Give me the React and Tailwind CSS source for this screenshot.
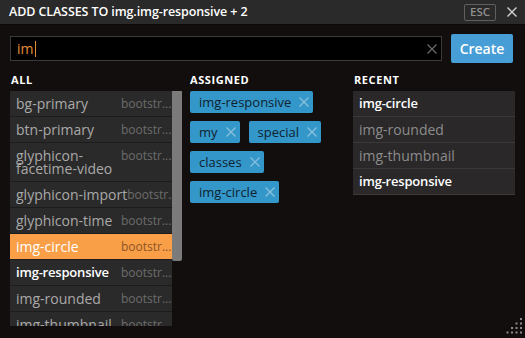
import React from "react";

const F = { fontFamily: '"Open Sans", "Liberation Sans", sans-serif' };

function X({ size = 10, color = "#ccc", w = 1.3 }) {
  return (
    <svg width={size} height={size} viewBox="0 0 10 10" className="shrink-0">
      <path d="M0.5 0.5 L9.5 9.5 M9.5 0.5 L0.5 9.5" stroke={color} strokeWidth={w} fill="none" />
    </svg>
  );
}

const allRows = [
  { name: "bg-primary" },
  { name: "btn-primary" },
  { name: "glyphicon-\nfacetime-video" },
  { name: "glyphicon-import" },
  { name: "glyphicon-time" },
  { name: "img-circle", active: true },
  { name: "img-responsive", bold: true },
  { name: "img-rounded" },
  { name: "img-thumbnail" },
];

const recent = [
  { name: "img-circle", bold: true },
  { name: "img-rounded" },
  { name: "img-thumbnail" },
  { name: "img-responsive", bold: true },
];

function Tag({ children }) {
  return (
    <div className="flex h-[22px] items-center rounded-[2px] bg-[#3497c9] pl-[9px] pr-[4px] text-[13px] text-[#0f2230]">
      <span className="leading-none">{children}</span>
      <span className="ml-[8px]">
        <X size={10} color="#8cc2dd" w={1.2} />
      </span>
    </div>
  );
}

export default function App() {
  return (
    <div style={F} className="relative flex h-[338px] w-[525px] flex-col overflow-hidden bg-[#110e0d]">
      {/* header */}
      <div className="flex h-[25px] shrink-0 items-center border-b border-[#0a0a0a] bg-[#2b2a2a] pl-[9px] pr-[8px]">
        <div className="flex-1 text-[12.5px] font-semibold tracking-[-0.1px] text-white">
          ADD CLASSES TO img.img-responsive + 2
        </div>
        <div className="flex h-[17px] w-[32px] items-center justify-center rounded-[2px] border border-[#5f5f5f] text-[11.5px] font-semibold text-[#8e8e8e]">
          ESC
        </div>
        <div className="ml-[11px]">
          <X size={10} color="#d0d0d0" w={1.4} />
        </div>
      </div>

      {/* input row */}
      <div className="mt-[9px] flex h-[29px] items-center pl-[10px] pr-[12px]">
        <div className="flex h-[25px] w-[432px] items-center border border-[#3d3b3a] bg-black pl-[6px] pr-[4px]">
          <span className="text-[14px] leading-none text-[#e88f3a]">im</span>
          <span className="ml-[1px] h-[16px] w-[1px] bg-[#e88f3a]" />
          <div className="flex-1" />
          <X size={10} color="#6a6a6a" w={1.2} />
        </div>
        <div className="ml-[9px] flex h-[29px] w-[62px] items-center justify-center rounded-[2px] bg-[#479ed6] text-[14px] font-semibold text-white">
          Create
        </div>
      </div>

      {/* columns */}
      <div className="mt-[10px] flex gap-[8px] pl-[10px]">
        {/* ALL */}
        <div className="flex w-[172px] flex-col">
          <div className="h-[18px] pl-[1px] text-[11px] font-bold leading-[14px] tracking-[0.6px] text-white">ALL</div>
          <div className="flex h-[235px] overflow-hidden">
            <div className="w-[162px]">
              {allRows.map((r, i) => (
                <div
                  key={i}
                  className={
                    "flex border-b border-[#1c1c1c] py-[6px] pl-[6px] pr-[5px] " +
                    (r.active ? "bg-[#f89f48]" : "bg-[#2b2a2a]")
                  }
                >
                  <div
                    className={
                      "flex-1 whitespace-pre leading-[13px] " +
                      (r.active
                        ? "text-[14px] text-white"
                        : r.bold
                        ? "text-[13px] font-semibold tracking-[-0.2px] text-white"
                        : "text-[14px] text-[#a9a9a9]")
                    }
                  >
                    {r.name}
                  </div>
                  <div
                    className={
                      "w-[46px] text-[12px] leading-[13px] " + (r.active ? "text-[#8d5526]" : "text-[#6c6c6c]")
                    }
                  >
                    bootstr...
                  </div>
                </div>
              ))}
            </div>
            <div className="h-[170px] w-[10px] rounded-b-[2px] bg-[#7b7b7b]" />
          </div>
        </div>

        {/* ASSIGNED */}
        <div className="flex w-[155px] flex-col">
          <div className="h-[18px] text-[11px] font-bold leading-[14px] tracking-[0.6px] text-white">ASSIGNED</div>
          <div className="flex flex-col gap-[8px]">
            <div className="flex">
              <Tag>img-responsive</Tag>
            </div>
            <div className="flex gap-[9px]">
              <Tag>my</Tag>
              <Tag>special</Tag>
            </div>
            <div className="flex">
              <Tag>classes</Tag>
            </div>
            <div className="flex">
              <Tag>img-circle</Tag>
            </div>
          </div>
        </div>

        {/* RECENT */}
        <div className="flex w-[162px] flex-col">
          <div className="h-[18px] pl-[1px] text-[11px] font-bold leading-[14px] tracking-[0.6px] text-white">RECENT</div>
          <div className="flex flex-col">
            {recent.map((r, i) => (
              <div
                key={i}
                className={
                  "border-b border-[#3a3838] bg-[#2a2828] py-[6px] pl-[6px] leading-[13px] " +
                  (r.bold ? "text-[13px] font-semibold tracking-[-0.2px] text-white" : "text-[14px] text-[#8c8c8c]")
                }
              >
                {r.name}
              </div>
            ))}
          </div>
        </div>
      </div>

      {/* resize grip */}
      <svg className="absolute bottom-[2px] right-[2px]" width="18" height="18" viewBox="0 0 18 18">
        {[
          [16, 1],
          [11.5, 5.5], [16, 5.5],
          [7, 10], [11.5, 10], [16, 10],
          [2.5, 14.5], [7, 14.5], [11.5, 14.5], [16, 14.5],
        ].map(([cx, cy], i) => (
          <rect key={i} x={cx - 1} y={cy - 1} width="2" height="2" fill="#8a8a8a" />
        ))}
      </svg>
    </div>
  );
}
